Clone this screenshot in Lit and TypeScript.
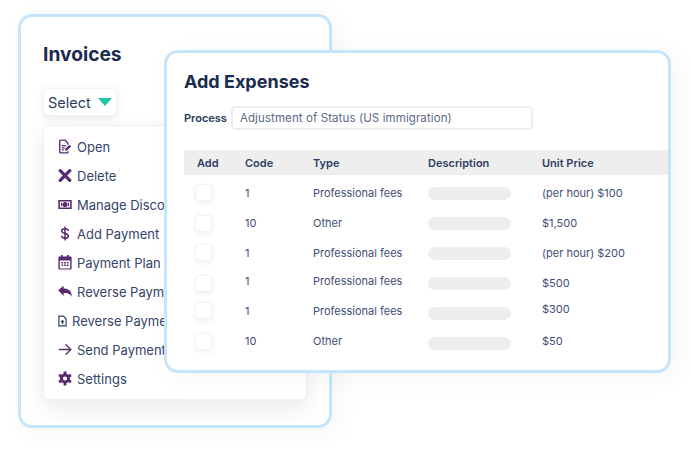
import { LitElement, html, css, svg } from "lit";
import { customElement } from "lit/decorators.js";

const P = "#5a2a6e";
const icons: Record<string, unknown> = {
  open: svg`<svg class="ic" viewBox="0 0 14 16" fill="none"><path d="M10 6V4.4L7 1.2H2.4a1 1 0 0 0-1 1v11.6a1 1 0 0 0 1 1h6.800a1 1 0 0 0 1-1V13" stroke="${P}" stroke-width="1.5"/><path d="M3.6 7h4.6M3.6 9.4h3.2M3.6 11.6h2" stroke="${P}" stroke-width="1.2"/><path d="M6.8 12.6l.5-2.2 4.4-4.2 1.8 1.8-4.4 4.2z" fill="${P}"/></svg>`,
  del: svg`<svg class="ic" viewBox="0 0 14 14"><path d="M2.2 2.2l9.6 9.6M11.8 2.2l-9.6 9.6" stroke="${P}" stroke-width="3.2" stroke-linecap="round"/></svg>`,
  money: svg`<svg class="ic" viewBox="0 0 14 14"><path fill-rule="evenodd" fill="${P}" d="M.3 2.4h13.4v9.2H.3zM1.9 4v6h10.200V4z"/><circle cx="7" cy="7" r="2.5" fill="${P}"/><rect x="3" y="5.4" width="1.1" height="3.2" fill="${P}"/><rect x="9.9" y="5.4" width="1.1" height="3.2" fill="${P}"/></svg>`,
  dollar: svg`<svg class="ic" viewBox="0 0 14 16" fill="none"><path d="M10.6 5.2C10.4 3.7 9 2.9 7 2.9S3.4 3.9 3.4 5.4c0 3.3 7.2 1.900 7.2 5.200 0 1.500-1.500 2.500-3.600 2.500s-3.400-1-3.600-2.500M7 .6v14.800" stroke="${P}" stroke-width="1.6"/></svg>`,
  cal: svg`<svg class="ic" viewBox="0 0 14 15"><path fill-rule="evenodd" fill="${P}" d="M3 0h1.800v1.600h4.400V0H11v1.600h1.600a1 1 0 0 1 1 1v11a1 1 0 0 1-1 1H1.400a1 1 0 0 1-1-1v-11a1 1 0 0 1 1-1H3zM1.800 5.400v8.200h10.400V5.400z"/><path fill="${P}" d="M3.400 7h1.800v1.400H3.400zM6.100 7h1.800v1.400H6.100zM8.800 7h1.800v1.400H8.800zM3.400 9.600h1.800V11H3.400zM6.100 9.600h1.800V11H6.100zM8.800 9.600h1.800V11H8.800z"/></svg>`,
  reply: svg`<svg class="ic" viewBox="0 0 14 14"><path fill="${P}" d="M.2 5.800L5.600 1.200v2.900c4.400.1 8.200 1.800 8.200 8.400-1.400-3.400-4.200-4-8.200-4v2.900z"/></svg>`,
  file: svg`<svg class="ic small" viewBox="0 0 10 13" fill="none"><path d="M1 1h5l3 3v8H1z" stroke="#2f3f63" stroke-width="1.3"/><path d="M5 10V6.200M3.300 7.800L5 6l1.700 1.800" stroke="#2f3f63" stroke-width="1.3"/></svg>`,
  arrow: svg`<svg class="ic" viewBox="0 0 14 14" fill="none"><path d="M.8 7h11.800M7.600 1.800l5.200 5.200-5.200 5.200" stroke="${P}" stroke-width="1.3"/></svg>`,
  cog: svg`<svg class="ic" viewBox="0 0 14 14"><circle cx="7" cy="7" r="3.600" fill="none" stroke="${P}" stroke-width="3"/><g stroke="${P}" stroke-width="2.800"><path d="M7 .1v2.600M7 11.300v2.600M1 3.500l2.300 1.300M10.700 9.200l2.300 1.300M1 10.500l2.300-1.300M10.700 4.800l2.300-1.300"/></g></svg>`,
};

const menu = [
  ["open", "Open"],
  ["del", "Delete"],
  ["money", "Manage Discounts"],
  ["dollar", "Add Payment"],
  ["cal", "Payment Plan"],
  ["reply", "Reverse Payment"],
  ["file", "Reverse Payment Plan"],
  ["arrow", "Send Payment Reminder"],
  ["cog", "Settings"],
];

// per-row vertical offsets (px) as seen in the picture: checkbox, code/type, price
const rows = [
  { code: "1", type: "Professional fees", price: "(per hour) $100", c: -1, t: 0, p: 0 },
  { code: "10", type: "Other", price: "$1,500", c: 0, t: 0, p: 0 },
  { code: "1", type: "Professional fees", price: "(per hour) $200", c: -1, t: 0, p: 0 },
  { code: "1", type: "Professional fees", price: "$500", c: 0, t: -2, p: 0 },
  { code: "1", type: "Professional fees", price: "$300", c: -3, t: -2, p: -4 },
  { code: "10", type: "Other", price: "$50", c: -2, t: -2, p: -2 },
];

@customElement("app-root")
export class AppRoot extends LitElement {
  static styles = css`
    :host {
      display: block;
      position: relative;
      width: 691px;
      height: 450px;
      overflow: hidden;
      background: #fff;
      font-family: Inter, "Liberation Sans", sans-serif;
      color: #3c4b6e;
    }
    .card {
      position: absolute;
      box-sizing: border-box;
      background: #fff;
      border: 3px solid #c6e5fb;
      border-radius: 14px;
      box-shadow: 6px 4px 24px rgba(40, 50, 80, 0.05);
    }
    .back {
      left: 18px;
      top: 14px;
      width: 314px;
      height: 414px;
      padding: 24px 22px 0 22px;
    }
    .front {
      left: 164px;
      top: 50px;
      width: 507px;
      height: 323px;
      padding: 15px 0 0 17px;
    }
    h1 {
      margin: 0;
      line-height: 27px;
      font-weight: 700;
      color: #1b2b4f;
    }
    .back h1 { font-size: 19.2px; }
    .front h1 { font-size: 18px; }
    .select {
      display: inline-flex;
      align-items: center;
      gap: 7px;
      box-sizing: border-box;
      margin-top: 20px;
      width: 74px;
      height: 28px;
      padding-left: 4px;
      background: #fff;
      border: 1px solid #f1f1f1;
      border-radius: 5px;
      box-shadow: 0 2px 8px rgba(40, 50, 80, 0.1);
      font-size: 14.5px;
      color: #2c3c60;
    }
    .tri {
      width: 0;
      height: 0;
      border-left: 7px solid transparent;
      border-right: 7px solid transparent;
      border-top: 8px solid #1cc5a6;
    }
    .menu {
      box-sizing: border-box;
      width: 264px;
      height: 275px;
      margin-top: 9px;
      padding: 6px 0 0 14px;
      background: #fff;
      border: 1px solid #efefef;
      border-radius: 5px;
      box-shadow: 0 8px 22px rgba(40, 50, 80, 0.1);
    }
    .item {
      display: flex;
      align-items: center;
      gap: 5px;
      height: 29px;
      font-size: 13px;
      white-space: nowrap;
      color: #35446a;
    }
    .iw {
      flex: none;
      display: flex;
      justify-content: center;
      width: 14px;
    }
    .item.tight .iw { width: 9px; }
    .ic { width: 14px; height: 15px; display: block; }
    .ic.small { width: 9px; height: 12px; }
    .process {
      display: flex;
      align-items: center;
      gap: 4px;
      margin-top: 11px;
      font-size: 11px;
      font-weight: 600;
      color: #2a3a5e;
    }
    .input {
      box-sizing: border-box;
      width: 302px;
      height: 24px;
      line-height: 21px;
      padding-left: 7px;
      border: 2px solid #ececec;
      border-radius: 5px;
      font-size: 11.5px;
      font-weight: 400;
      letter-spacing: 0.1px;
      color: #5b6885;
    }
    .grid {
      display: grid;
      grid-template-columns: 61px 68px 115px 114px 1fr;
    }
    .head {
      margin-top: 20px;
      height: 25px;
      align-items: center;
      background: #eeeeee;
      font-size: 11px;
      font-weight: 600;
      color: #2f3f63;
    }
    .head > :first-child { padding-left: 13px; }
    .row {
      height: 30px;
      align-items: center;
      font-size: 11px;
      color: #3f4e75;
    }
    .body { padding-top: 3px; }
    .box {
      box-sizing: border-box;
      width: 17px;
      height: 17px;
      margin-left: 11px;
      background: #fff;
      border: 1px solid #f2f2f2;
      border-radius: 3px;
      box-shadow: 1px 2px 5px rgba(40, 50, 80, 0.07);
    }
    .pill {
      width: 83px;
      height: 13px;
      background: #eeeeee;
      border-radius: 7px;
    }
  `;

  render() {
    return html`
      <section class="card back">
        <h1>Invoices</h1>
        <div class="select">Select <span class="tri"></span></div>
        <div class="menu">
          ${menu.map(
            ([k, label]) => html`<div class="item ${k === "file" ? "tight" : ""}">
              <span class="iw">${icons[k]}</span><span>${label}</span>
            </div>`
          )}
        </div>
      </section>
      <section class="card front">
        <h1>Add Expenses</h1>
        <div class="process">
          Process
          <div class="input">Adjustment of Status (US immigration)</div>
        </div>
        <div class="grid head">
          <span>Add</span><span>Code</span><span>Type</span><span>Description</span><span>Unit Price</span>
        </div>
        <div class="body">
          ${rows.map(
            (r) => html`<div class="grid row">
              <div class="box" style="transform:translateY(${r.c}px)"></div>
              <span style="transform:translateY(${r.t}px)">${r.code}</span>
              <span style="transform:translateY(${r.t}px)">${r.type}</span>
              <div class="pill"></div>
              <span style="transform:translateY(${r.p}px)">${r.price}</span>
            </div>`
          )}
        </div>
      </section>
    `;
  }
}
